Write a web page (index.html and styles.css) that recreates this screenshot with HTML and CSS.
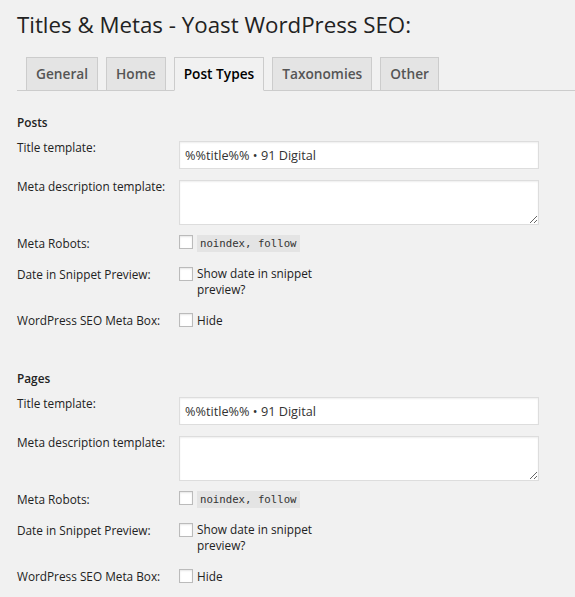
FILE: index.html
```html
<!DOCTYPE html>
<html>
<head>
<meta charset="utf-8">
<link rel="stylesheet" href="styles.css">
</head>
<body>
<div class="wrap">
  <h1 class="page-title">Titles &amp; Metas - Yoast WordPress SEO:</h1>
  <nav class="tabs">
    <span class="tab">General</span>
    <span class="tab">Home</span>
    <span class="tab tab-active">Post Types</span>
    <span class="tab">Taxonomies</span>
    <span class="tab">Other</span>
  </nav>

  <section class="section">
    <h2 class="section-title">Posts</h2>
    <div class="row row-title">
      <label class="label">Title template:</label>
      <input class="text-input" type="text" value="%%title%% • 91 Digital">
    </div>
    <div class="row row-desc">
      <label class="label">Meta description template:</label>
      <textarea class="text-area"></textarea>
    </div>
    <div class="row row-robots">
      <label class="label">Meta Robots:</label>
      <div class="option">
        <input class="check check-robots" type="checkbox">
        <code class="code">noindex, follow</code>
      </div>
    </div>
    <div class="row row-date">
      <label class="label">Date in Snippet Preview:</label>
      <div class="option">
        <input class="check check-date" type="checkbox">
        <span class="option-text wrap-text">Show date in snippet preview?</span>
      </div>
    </div>
    <div class="row row-box">
      <label class="label">WordPress SEO Meta Box:</label>
      <div class="option">
        <input class="check check-box" type="checkbox">
        <span class="option-text">Hide</span>
      </div>
    </div>
  </section>

  <section class="section">
    <h2 class="section-title">Pages</h2>
    <div class="row row-title">
      <label class="label">Title template:</label>
      <input class="text-input" type="text" value="%%title%% • 91 Digital">
    </div>
    <div class="row row-desc">
      <label class="label">Meta description template:</label>
      <textarea class="text-area"></textarea>
    </div>
    <div class="row row-robots">
      <label class="label">Meta Robots:</label>
      <div class="option">
        <input class="check check-robots" type="checkbox">
        <code class="code">noindex, follow</code>
      </div>
    </div>
    <div class="row row-date">
      <label class="label">Date in Snippet Preview:</label>
      <div class="option">
        <input class="check check-date" type="checkbox">
        <span class="option-text wrap-text">Show date in snippet preview?</span>
      </div>
    </div>
    <div class="row row-box">
      <label class="label">WordPress SEO Meta Box:</label>
      <div class="option">
        <input class="check check-box" type="checkbox">
        <span class="option-text">Hide</span>
      </div>
    </div>
  </section>
</div>
</body>
</html>
```

FILE: styles.css
```css
html, body {
  margin: 0;
  padding: 0;
  background: #f1f1f1;
}
body {
  font-family: "Open Sans", "Liberation Sans", sans-serif;
  font-size: 11.8px;
  color: #222;
  overflow: hidden;
}
.wrap {
  padding-left: 17px;
}
.page-title {
  margin: 10px 0 0;
  font-size: 22.3px;
  line-height: 29px;
  font-weight: 400;
  color: #222;
}
.tabs {
  margin-top: 18px;
  display: flex;
  align-items: flex-end;
  gap: 8px;
  padding-left: 9px;
  border-bottom: 1px solid #ccc;
  height: 33px;
}
.tab {
  box-sizing: border-box;
  height: 34px;
  margin-bottom: -1px;
  padding: 4px 9px;
  line-height: 24px;
  font-size: 13.7px;
  font-weight: 600;
  color: #555;
  background: #e4e4e4;
  border: 1px solid #ccc;
}
.tab-active {
  background: #f1f1f1;
  color: #000;
  border-bottom-color: #f1f1f1;
}
.section {
  margin-top: 22px;
}
.section + .section {
  margin-top: 40px;
}
.section-title {
  margin: 0;
  font-size: 11.8px;
  line-height: 18px;
  font-weight: 600;
  color: #222;
}
.row {
  display: flex;
  align-items: flex-start;
}
.label {
  width: 162px;
  flex: none;
  line-height: 18px;
}
.row-title { margin-top: 7px; }
.row-desc { margin-top: 8px; }
.row-robots { margin-top: 9px; }
.row-date { margin-top: 13px; }
.row-box { margin-top: 14px; }

.text-input,
.text-area {
  box-sizing: border-box;
  width: 360px;
  margin: 3px 0 0;
  border: 1px solid #ddd;
  background: #fff;
  box-shadow: inset 0 1px 2px rgba(0, 0, 0, 0.07);
  font-family: "Open Sans", "Liberation Sans", sans-serif;
  font-size: 12.7px;
  color: #333;
  outline: none;
}
.text-input {
  height: 28px;
  padding: 0 5px;
}
.text-area {
  height: 45px;
  padding: 2px 5px;
  resize: vertical;
  display: block;
}
.option {
  display: flex;
  align-items: flex-start;
  gap: 4px;
}
.check {
  appearance: none;
  -webkit-appearance: none;
  box-sizing: border-box;
  width: 14px;
  height: 14px;
  margin: 0;
  flex: none;
  background: #fff;
  border: 1px solid #bbb;
  box-shadow: inset 0 1px 2px rgba(0, 0, 0, 0.1);
}
.check-robots { margin-top: 1px; }
.check-date { margin-top: 2px; }
.check-box { margin-top: 2px; }
.code {
  display: inline-block;
  margin-top: 1px;
  padding: 0 3px;
  line-height: 17px;
  background: #e4e4e4;
  font-family: "DejaVu Sans Mono", "Liberation Mono", monospace;
  font-size: 10.7px;
  color: #333;
}
.option-text {
  line-height: 18px;
}
.wrap-text {
  width: 125px;
  line-height: 16px;
}
```
